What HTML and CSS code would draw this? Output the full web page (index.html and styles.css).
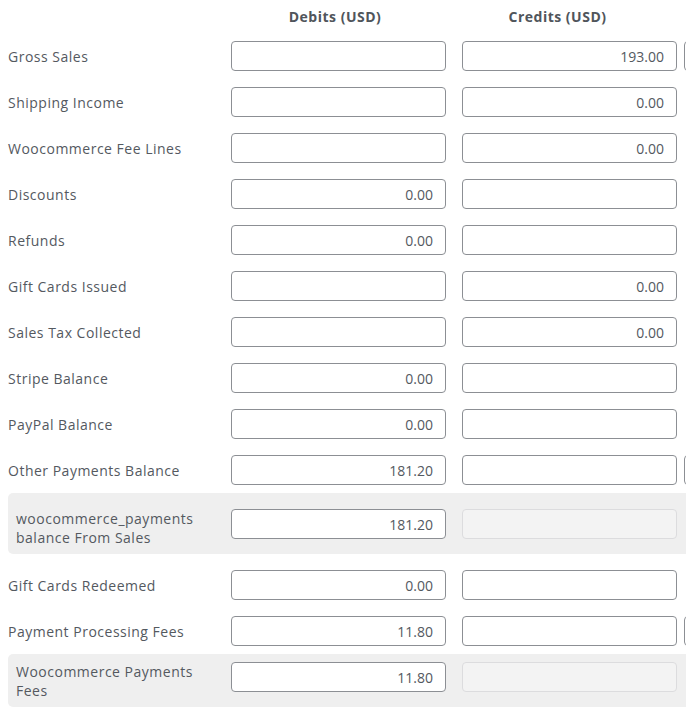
FILE: index.html
```html
<!DOCTYPE html>
<html lang="en">

<head>
    <meta charset="UTF-8">
    <meta name="viewport" content="width=device-width, initial-scale=1.0">
    <title>Journal Entry</title>
    <link rel="stylesheet" href="styles.css">
</head>

<body>
    <div class="journal">
        <div class="head">
            <div class="label"></div>
            <div class="col-title debit">Debits (USD)</div>
            <div class="col-title credit">Credits (USD)</div>
        </div>

        <div class="row">
            <div class="label">Gross Sales</div>
            <input class="amount" type="text" value="">
            <input class="amount credit" type="text" value="193.00">
            <input class="amount extra" type="text" value="">
        </div>
        <div class="row">
            <div class="label">Shipping Income</div>
            <input class="amount" type="text" value="">
            <input class="amount credit" type="text" value="0.00">
        </div>
        <div class="row">
            <div class="label">Woocommerce Fee Lines</div>
            <input class="amount" type="text" value="">
            <input class="amount credit" type="text" value="0.00">
        </div>
        <div class="row">
            <div class="label">Discounts</div>
            <input class="amount" type="text" value="0.00">
            <input class="amount credit" type="text" value="">
        </div>
        <div class="row">
            <div class="label">Refunds</div>
            <input class="amount" type="text" value="0.00">
            <input class="amount credit" type="text" value="">
        </div>
        <div class="row">
            <div class="label">Gift Cards Issued</div>
            <input class="amount" type="text" value="">
            <input class="amount credit" type="text" value="0.00">
        </div>
        <div class="row">
            <div class="label">Sales Tax Collected</div>
            <input class="amount" type="text" value="">
            <input class="amount credit" type="text" value="0.00">
        </div>
        <div class="row">
            <div class="label">Stripe Balance</div>
            <input class="amount" type="text" value="0.00">
            <input class="amount credit" type="text" value="">
        </div>
        <div class="row">
            <div class="label">PayPal Balance</div>
            <input class="amount" type="text" value="0.00">
            <input class="amount credit" type="text" value="">
        </div>
        <div class="row">
            <div class="label">Other Payments Balance</div>
            <input class="amount" type="text" value="181.20">
            <input class="amount credit" type="text" value="">
            <input class="amount extra" type="text" value="">
        </div>
        <div class="row sub first">
            <div class="label">woocommerce_payments balance From Sales</div>
            <input class="amount" type="text" value="181.20">
            <input class="amount credit" type="text" value="" disabled>
        </div>
        <div class="row">
            <div class="label">Gift Cards Redeemed</div>
            <input class="amount" type="text" value="0.00">
            <input class="amount credit" type="text" value="">
        </div>
        <div class="row">
            <div class="label">Payment Processing Fees</div>
            <input class="amount" type="text" value="11.80">
            <input class="amount credit" type="text" value="">
            <input class="amount extra" type="text" value="">
        </div>
        <div class="row sub">
            <div class="label">Woocommerce Payments Fees</div>
            <input class="amount" type="text" value="11.80">
            <input class="amount credit" type="text" value="" disabled>
        </div>
    </div>
</body>

</html>
```

FILE: styles.css
```css
html {
    overflow: hidden;
}

body {
    margin: 0;
    padding: 0;
    font-family: "Open Sans", sans-serif;
    font-size: 14px;
    letter-spacing: 0.5px;
    color: #54595f;
    background-color: #ffffff;
}

.journal {
    width: 910px;
}

.head {
    display: flex;
    height: 33px;
    padding-top: 7px;
    box-sizing: border-box;
}

.col-title {
    width: 215px;
    font-weight: 700;
    line-height: 19px;
    color: #50555b;
    text-align: center;
}

.col-title.debit {
    padding-right: 7px;
    box-sizing: border-box;
}

.col-title.credit {
    margin-left: 16px;
    padding-right: 24px;
    box-sizing: border-box;
}

.row {
    display: flex;
    align-items: center;
    padding: 8px 0;
}

.label {
    width: 231px;
    flex-shrink: 0;
    padding-left: 8px;
    box-sizing: border-box;
    line-height: 19px;
}

.amount {
    width: 215px;
    height: 30px;
    flex-shrink: 0;
    margin: 0;
    padding: 0 12px;
    box-sizing: border-box;
    border: 1px solid #8c8f94;
    border-radius: 4px;
    font-family: inherit;
    font-size: 14px;
    color: #54595f;
    text-align: right;
    background-color: #ffffff;
}

.amount.credit {
    margin-left: 16px;
}

.amount.extra {
    margin-left: 7px;
}

.amount:disabled {
    background-color: #f3f3f3;
    border-color: #dcdcde;
}

.row.sub {
    align-items: flex-start;
    margin-left: 8px;
    margin-bottom: 8px;
    padding: 8px 0 7px 0;
    background-color: #efefef;
    border-radius: 5px;
}

.row.sub.first {
    padding-top: 16px;
}

.row.sub .label {
    width: 223px;
    padding-right: 10px;
}
```
